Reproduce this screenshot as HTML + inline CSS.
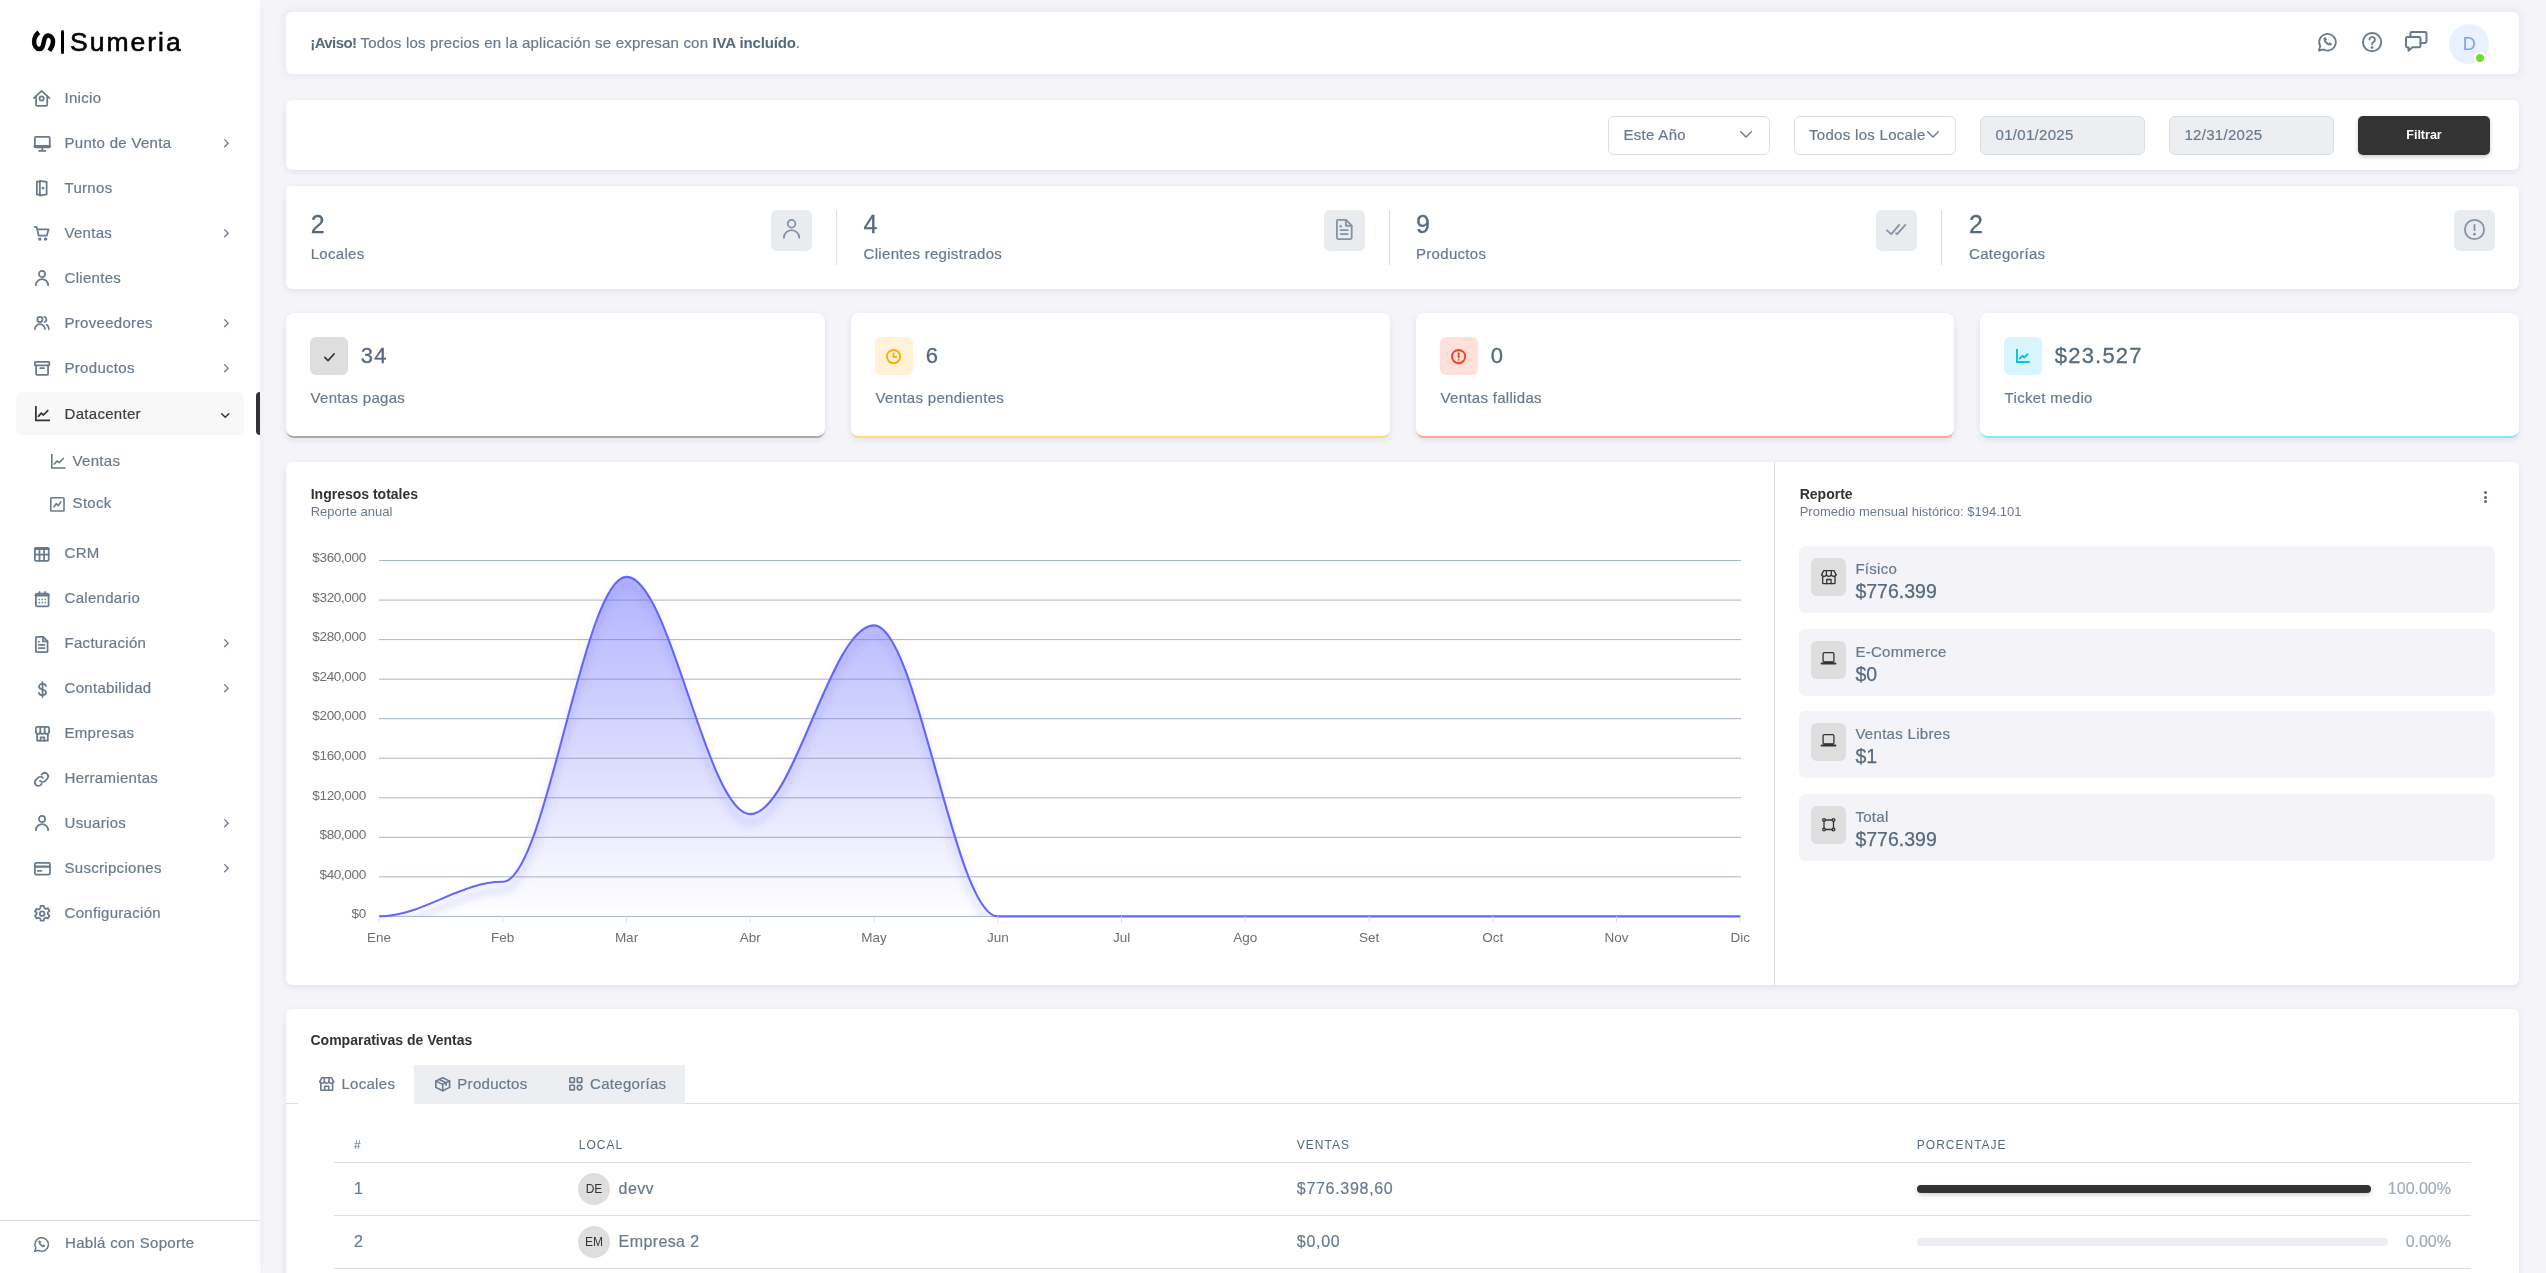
<!DOCTYPE html>
<html lang="es">
<head>
<meta charset="utf-8">
<title>Sumeria - Datacenter Ventas</title>
<style>
*{box-sizing:border-box;margin:0;padding:0}
html,body{width:2546px;height:1273px;overflow:hidden}
body{background:#f5f5f9;font-family:"Liberation Sans",sans-serif;color:#697a8d;position:relative}
.a{position:absolute}
.t{position:absolute;line-height:1;white-space:nowrap}
svg.i{position:absolute;fill:none;stroke:currentColor;stroke-width:2;stroke-linecap:round;stroke-linejoin:round;overflow:visible}
</style>
</head>
<body>

<div class="a" style="left:0;top:0;width:2546px;height:1273px;will-change:transform">
<div class="a" style="left:0;top:0;width:260px;height:1273px;background:#fff;box-shadow:0 0 6px rgba(161,172,184,.12)"></div>
<svg class="a" style="left:31px;top:30px;overflow:visible" width="25" height="24" viewBox="0 0 25 24"><path d="M7.9 2.4 C5 4.6 3.1 8 3.1 11.8 C3.1 16 5.3 19.1 8.4 19.1 C10.8 19.1 11.8 16.8 12.4 13.8 L13.5 9 C14.2 6.6 15.5 5.4 17.2 5.4 C20 5.4 22 8.2 22 11.8 C22 15 20.5 17.9 18.4 20.8" fill="none" stroke="#000" stroke-width="4.5" stroke-linecap="butt"/></svg>
<div class="a" style="left:61.2px;top:30px;width:3.3px;height:24px;background:#000;border-radius:1.7px;"></div>
<div class="t" style="left:70px;top:29.37px;font-size:26.5px;color:#000;letter-spacing:2px;-webkit-text-stroke:0.6px #000;">Sumeria</div>
<svg class="i" style="left:33.33px;top:89.65px;width:17.34px;height:16.70px;color:#697a8d;stroke-width:2.201" viewBox="1.100 1.500 21.801 21.001"><path d="M2.2 11.6 L12 2.6 L21.8 11.6"/><path d="M5 9.2 V20 q0 1.4 1.4 1.4 H17.6 q1.4 0 1.4-1.4 V9.2"/><circle cx="12" cy="12.3" r="2.7"/></svg>
<div class="t" style="left:64.5px;top:90.30px;font-size:15px;color:#697a8d;letter-spacing:0.3px;-webkit-text-stroke:0.2px #697a8d;">Inicio</div>
<svg class="i" style="left:33.70px;top:135.90px;width:16.61px;height:15.80px;color:#697a8d;stroke-width:2.167" viewBox="1.716 2.116 20.567 19.567"><rect x="2.8" y="3.2" width="18.4" height="13" rx="1"/><path d="M2.8 15 H21.2" stroke-width="3.2"/><path d="M12 17 V20.2 M8.2 20.6 H15.8"/></svg>
<div class="t" style="left:64.5px;top:135.30px;font-size:15px;color:#697a8d;letter-spacing:0.3px;-webkit-text-stroke:0.2px #697a8d;">Punto de Venta</div>
<svg class="i" style="left:224.19px;top:138.80px;width:4.83px;height:8.40px;color:#697a8d;stroke-width:2.098" viewBox="7.951 4.951 8.098 14.098"><path d="M9 6 L15 12 L9 18"/></svg>
<svg class="i" style="left:36.24px;top:180.00px;width:11.52px;height:16.40px;color:#697a8d;stroke-width:2.294" viewBox="3.453 1.253 15.094 21.494"><path d="M8.5 3.5 H4.6 V20.5 H8.5"/><path d="M8.5 2.4 L17.4 3.8 V20.2 L8.5 21.6 Z"/><circle cx="12.6" cy="12" r=".7" fill="currentColor"/></svg>
<div class="t" style="left:64.5px;top:180.30px;font-size:15px;color:#697a8d;letter-spacing:0.3px;-webkit-text-stroke:0.2px #697a8d;">Turnos</div>
<svg class="i" style="left:34.26px;top:226.00px;width:15.48px;height:14.80px;color:#697a8d;stroke-width:2.320" viewBox="1.240 2.240 20.520 19.620"><path d="M2.4 3.4 H4.6 L7.4 15 H18.2 L20.6 6.6 H5.8"/><circle cx="9" cy="19.6" r="1.1" fill="currentColor"/><circle cx="16.6" cy="19.6" r="1.1" fill="currentColor"/></svg>
<div class="t" style="left:64.5px;top:225.30px;font-size:15px;color:#697a8d;letter-spacing:0.3px;-webkit-text-stroke:0.2px #697a8d;">Ventas</div>
<svg class="i" style="left:224.19px;top:228.80px;width:4.83px;height:8.40px;color:#697a8d;stroke-width:2.098" viewBox="7.951 4.951 8.098 14.098"><path d="M9 6 L15 12 L9 18"/></svg>
<svg class="i" style="left:34.99px;top:270.15px;width:14.03px;height:16.10px;color:#697a8d;stroke-width:2.110" viewBox="3.545 2.645 16.910 19.410"><circle cx="12" cy="7.4" r="3.7"/><path d="M4.6 21 a7.4 7.4 0 0 1 14.8 0"/></svg>
<div class="t" style="left:64.5px;top:270.30px;font-size:15px;color:#697a8d;letter-spacing:0.3px;-webkit-text-stroke:0.2px #697a8d;">Clientes</div>
<svg class="i" style="left:34.14px;top:316.20px;width:15.72px;height:14.00px;color:#697a8d;stroke-width:2.357" viewBox="1.421 2.921 21.175 18.857"><circle cx="9.4" cy="7.6" r="3.5"/><path d="M2.6 20.6 a6.8 6.8 0 0 1 13.6 0"/><path d="M15.2 4.2 a3.5 3.5 0 0 1 .4 6.8 M18.6 14.6 a6.8 6.8 0 0 1 2.8 6"/></svg>
<div class="t" style="left:64.5px;top:315.30px;font-size:15px;color:#697a8d;letter-spacing:0.3px;-webkit-text-stroke:0.2px #697a8d;">Proveedores</div>
<svg class="i" style="left:224.19px;top:318.80px;width:4.83px;height:8.40px;color:#697a8d;stroke-width:2.098" viewBox="7.951 4.951 8.098 14.098"><path d="M9 6 L15 12 L9 18"/></svg>
<svg class="i" style="left:33.91px;top:360.90px;width:16.18px;height:14.80px;color:#697a8d;stroke-width:2.280" viewBox="1.460 2.460 21.080 19.280"><rect x="2.6" y="3.6" width="18.8" height="4.6" rx="1"/><path d="M4.2 8.2 V19.4 q0 1.2 1.2 1.2 H18.6 q1.2 0 1.2-1.2 V8.2"/><path d="M9.6 11.8 H14.4"/></svg>
<div class="t" style="left:64.5px;top:360.30px;font-size:15px;color:#697a8d;letter-spacing:0.3px;-webkit-text-stroke:0.2px #697a8d;">Productos</div>
<svg class="i" style="left:224.19px;top:363.80px;width:4.83px;height:8.40px;color:#697a8d;stroke-width:2.098" viewBox="7.951 4.951 8.098 14.098"><path d="M9 6 L15 12 L9 18"/></svg>
<div class="a" style="left:16px;top:392px;width:228px;height:43px;background:#f8f8f8;border-radius:6px;"></div>
<div class="a" style="left:256px;top:392px;width:4px;height:43px;background:#333;border-radius:0px;border-radius:4px 0 0 4px;"></div>
<svg class="i" style="left:34.50px;top:405.75px;width:15.00px;height:15.30px;color:#333;stroke-width:2.325" viewBox="2.238 1.438 19.925 20.325"><path d="M3.4 2.6 V20.6 H21" stroke-linecap="square" stroke-linejoin="miter"/><path d="M6.8 15.2 L10.6 11 L13.4 13.4 L19.2 7.6"/></svg>
<div class="t" style="left:64.5px;top:405.70px;font-size:15px;color:#3d3d3d;letter-spacing:0.3px;-webkit-text-stroke:0.2px #3d3d3d;">Datacenter</div>
<svg class="i" style="left:220.95px;top:412.50px;width:8.50px;height:5.00px;color:#333;stroke-width:2.571" viewBox="4.714 7.714 14.571 8.571"><path d="M6 9 L12 15 L18 9"/></svg>
<svg class="i" style="left:50.65px;top:454.00px;width:14.51px;height:14.80px;color:#697a8d;stroke-width:2.182" viewBox="2.309 1.509 19.782 20.182"><path d="M3.4 2.6 V20.6 H21" stroke-linecap="square" stroke-linejoin="miter"/><path d="M6.8 15.2 L10.6 11 L13.4 13.4 L19.2 7.6"/></svg>
<div class="t" style="left:72.6px;top:453.40px;font-size:15px;color:#697a8d;letter-spacing:0.3px;-webkit-text-stroke:0.2px #697a8d;">Ventas</div>
<svg class="i" style="left:50.40px;top:496.90px;width:14.80px;height:14.80px;color:#697a8d;stroke-width:2.133" viewBox="2.133 2.133 19.733 19.733"><rect x="3.2" y="3.2" width="17.6" height="17.6" rx="1"/><path d="M7.4 15.4 L10.4 11 L13.2 13.6 L16.6 8.6"/></svg>
<div class="t" style="left:72.6px;top:495.30px;font-size:15px;color:#697a8d;letter-spacing:0.3px;-webkit-text-stroke:0.2px #697a8d;">Stock</div>
<svg class="i" style="left:34.21px;top:546.95px;width:15.58px;height:14.70px;color:#697a8d;stroke-width:2.378" viewBox="1.411 2.011 21.178 19.978"><rect x="2.6" y="3.2" width="18.8" height="17.6" rx="1.6"/><path d="M2.6 4.6 H21.4" stroke-width="3"/><path d="M2.6 12.4 H21.4 M8.9 4 V20.6 M15.1 4 V20.6"/></svg>
<div class="t" style="left:64.5px;top:545.30px;font-size:15px;color:#697a8d;letter-spacing:0.3px;-webkit-text-stroke:0.2px #697a8d;">CRM</div>
<svg class="i" style="left:34.76px;top:591.05px;width:14.48px;height:16.30px;color:#697a8d;stroke-width:2.309" viewBox="2.445 1.245 19.109 21.509"><rect x="3.6" y="4.6" width="16.8" height="17" rx="1.6"/><path d="M3.6 7 H20.4" stroke-width="3.2"/><path d="M8.4 2.4 V5 M15.6 2.4 V5"/><path d="M8 12.6 h.01 M12 12.6 h.01 M16 12.6 h.01 M8 16.6 h.01 M12 16.6 h.01 M16 16.6 h.01" stroke-width="2.2"/></svg>
<div class="t" style="left:64.5px;top:590.30px;font-size:15px;color:#697a8d;letter-spacing:0.3px;-webkit-text-stroke:0.2px #697a8d;">Calendario</div>
<svg class="i" style="left:35.28px;top:636.05px;width:13.44px;height:16.90px;color:#697a8d;stroke-width:2.125" viewBox="3.937 1.737 16.325 20.525"><path d="M5 4 q0-1.2 1.2-1.2 H13.8 L19.2 8.2 V20 q0 1.2-1.2 1.2 H6.2 q-1.2 0-1.2-1.2 Z"/><path d="M13.6 3 V8.4 H19"/><path d="M8.6 8.8 h.01" stroke-width="2.4"/><path d="M8.6 12.6 H15.4 M8.6 16.4 H15.4"/></svg>
<div class="t" style="left:64.5px;top:635.30px;font-size:15px;color:#697a8d;letter-spacing:0.3px;-webkit-text-stroke:0.2px #697a8d;">Facturación</div>
<svg class="i" style="left:224.19px;top:638.80px;width:4.83px;height:8.40px;color:#697a8d;stroke-width:2.098" viewBox="7.951 4.951 8.098 14.098"><path d="M9 6 L15 12 L9 18"/></svg>
<svg class="i" style="left:37.55px;top:680.80px;width:8.90px;height:17.00px;color:#697a8d;stroke-width:2.203" viewBox="6.298 1.298 11.203 21.403"><path d="M16.4 7.6 C16 5.4 14 4.8 12 4.8 C9.4 4.8 7.6 6.2 7.6 8.4 C7.6 13 16.4 11 16.4 15.6 C16.4 17.8 14.4 19.2 12 19.2 C9.6 19.2 7.8 18.2 7.4 16.2"/><path d="M12 2.4 V21.6"/></svg>
<div class="t" style="left:64.5px;top:680.30px;font-size:15px;color:#697a8d;letter-spacing:0.3px;-webkit-text-stroke:0.2px #697a8d;">Contabilidad</div>
<svg class="i" style="left:224.19px;top:683.80px;width:4.83px;height:8.40px;color:#697a8d;stroke-width:2.098" viewBox="7.951 4.951 8.098 14.098"><path d="M9 6 L15 12 L9 18"/></svg>
<svg class="i" style="left:34.51px;top:726.10px;width:14.97px;height:15.60px;color:#697a8d;stroke-width:2.224" viewBox="2.488 2.088 19.024 19.824"><path d="M3.6 9.4 V5 q0-1.8 1.8-1.8 H18.6 q1.8 0 1.8 1.8 V9.4"/><path d="M3.6 9.4 a2.8 2.8 0 0 0 5.6 0 a2.8 2.8 0 0 0 5.6 0 a2.8 2.8 0 0 0 5.6 0"/><path d="M9.2 9.4 V3.4 M14.8 9.4 V3.4"/><path d="M5.2 12.4 V20.8 H18.8 V12.4"/><path d="M9.6 20.8 V16.4 H14.4 V20.8"/></svg>
<div class="t" style="left:64.5px;top:725.30px;font-size:15px;color:#697a8d;letter-spacing:0.3px;-webkit-text-stroke:0.2px #697a8d;">Empresas</div>
<svg class="i" style="left:34.48px;top:772.05px;width:15.03px;height:14.70px;color:#697a8d;stroke-width:2.110" viewBox="2.938 3.138 18.124 17.724"><path d="M10.2 13.8 a4.2 4.2 0 0 0 5.9 .2 l3-3 a4.2 4.2 0 0 0-5.9-5.9 l-1.3 1.3"/><path d="M13.8 10.2 a4.2 4.2 0 0 0-5.9-.2 l-3 3 a4.2 4.2 0 0 0 5.9 5.9 l1.3-1.3"/></svg>
<div class="t" style="left:64.5px;top:770.30px;font-size:15px;color:#697a8d;letter-spacing:0.3px;-webkit-text-stroke:0.2px #697a8d;">Herramientas</div>
<svg class="i" style="left:34.99px;top:815.15px;width:14.03px;height:16.10px;color:#697a8d;stroke-width:2.110" viewBox="3.545 2.645 16.910 19.410"><circle cx="12" cy="7.4" r="3.7"/><path d="M4.6 21 a7.4 7.4 0 0 1 14.8 0"/></svg>
<div class="t" style="left:64.5px;top:815.30px;font-size:15px;color:#697a8d;letter-spacing:0.3px;-webkit-text-stroke:0.2px #697a8d;">Usuarios</div>
<svg class="i" style="left:224.19px;top:818.80px;width:4.83px;height:8.40px;color:#697a8d;stroke-width:2.098" viewBox="7.951 4.951 8.098 14.098"><path d="M9 6 L15 12 L9 18"/></svg>
<svg class="i" style="left:33.57px;top:861.50px;width:16.86px;height:13.40px;color:#697a8d;stroke-width:2.223" viewBox="1.288 3.488 21.423 17.023"><rect x="2.4" y="4.6" width="19.2" height="14.8" rx="1.6"/><path d="M2.4 9.4 H21.6" stroke-width="3"/><path d="M6.2 14.8 H10.4"/></svg>
<div class="t" style="left:64.5px;top:860.30px;font-size:15px;color:#697a8d;letter-spacing:0.3px;-webkit-text-stroke:0.2px #697a8d;">Suscripciones</div>
<svg class="i" style="left:224.19px;top:863.80px;width:4.83px;height:8.40px;color:#697a8d;stroke-width:2.098" viewBox="7.951 4.951 8.098 14.098"><path d="M9 6 L15 12 L9 18"/></svg>
<svg class="i" style="left:33.83px;top:905.00px;width:16.35px;height:16.60px;color:#697a8d;stroke-width:2.074" viewBox="2.263 1.763 19.374 19.674"><circle cx="12" cy="12" r="2.8"/><path d="M10.2 2.8 h3.6 l.6 2.5 1.9 1.1 2.5-.8 1.8 3.1-1.9 1.8 v2.2 l1.9 1.8-1.8 3.1-2.5-.8-1.9 1.1-.6 2.5 h-3.6 l-.6-2.5-1.9-1.1-2.5.8-1.8-3.1 1.9-1.8 v-2.2 L3.3 9.5 l1.8-3.1 2.5.8 1.9-1.1 Z"/></svg>
<div class="t" style="left:64.5px;top:905.30px;font-size:15px;color:#697a8d;letter-spacing:0.3px;-webkit-text-stroke:0.2px #697a8d;">Configuración</div>
<div class="a" style="left:0px;top:1220px;width:260px;height:1px;background:#d9dee3;border-radius:0px;"></div>
<svg class="i" style="left:34.32px;top:1236.70px;width:15.16px;height:15.00px;color:#697a8d;stroke-width:1.919" viewBox="2.241 2.574 19.385 19.185"><path d="M3.2 20.8 L4.6 16.4 A8.6 8.6 0 1 1 7.8 19.6 Z"/><path d="M8.6 8.4 q.3-1 1.2-1.1 l1.2 2.2 -.9 1 q.9 2 3 3 l1-.9 2.2 1.2 q-.1 .9-1.1 1.2 C11.6 15.4 8 11.8 8.6 8.4 Z" fill="currentColor" stroke-width="1"/></svg>
<div class="t" style="left:65px;top:1235.30px;font-size:15px;color:#697a8d;letter-spacing:0.3px;-webkit-text-stroke:0.2px #697a8d;">Hablá con Soporte</div>
<div class="a" style="left:286px;top:12px;width:2233px;height:62px;background:#fff;border-radius:6px;box-shadow:0 0 6px 3px rgba(161,172,184,.15)"></div>
<div class="t" style="left:310.3px;top:35.10px;font-size:15px;color:#697a8d;letter-spacing:0.0001px;-webkit-text-stroke:0.2px #697a8d;"><b style="color:#566a7f;letter-spacing:-0.6px;-webkit-text-stroke:0">¡Aviso!</b><span style="letter-spacing:0.2px"> Todos los precios en la aplicación se expresan con </span><b style="color:#566a7f;letter-spacing:-0.15px;-webkit-text-stroke:0">IVA incluído</b>.</div>
<svg class="i" style="left:2317.85px;top:32.65px;width:18.69px;height:18.50px;color:#697a8d;stroke-width:1.861" viewBox="2.269 2.603 19.328 19.128"><path d="M3.2 20.8 L4.6 16.4 A8.6 8.6 0 1 1 7.8 19.6 Z"/><path d="M8.6 8.4 q.3-1 1.2-1.1 l1.2 2.2 -.9 1 q.9 2 3 3 l1-.9 2.2 1.2 q-.1 .9-1.1 1.2 C11.6 15.4 8 11.8 8.6 8.4 Z" fill="currentColor" stroke-width="1"/></svg>
<svg class="i" style="left:2361.90px;top:32.00px;width:20.20px;height:20.20px;color:#697a8d;stroke-width:1.952" viewBox="1.624 1.624 20.752 20.752"><circle cx="12" cy="12" r="9.4"/><path d="M9.3 9.4 a2.8 2.8 0 1 1 4.2 2.5 c-.9.5-1.5 1.1-1.5 2.3"/><path d="M12 17.6 h.01" stroke-width="2.8"/></svg>
<svg class="i" style="left:2405.46px;top:31.25px;width:22.48px;height:20.70px;color:#697a8d;stroke-width:1.797" viewBox="1.902 2.902 20.197 18.597"><path d="M2.8 9.6 q0-1.2 1.2-1.2 H14.6 q1.2 0 1.2 1.2 V16.4 q0 1.2-1.2 1.2 H8.6 L5 20.6 V17.6 H4 q-1.2 0-1.2-1.2 Z"/><path d="M6.8 8.4 V5 q0-1.2 1.2-1.2 H20 q1.2 0 1.2 1.2 V12.4 q0 1.2-1.2 1.2 H15.8"/></svg>
<div class="a" style="left:2449px;top:24px;width:40px;height:40px;border-radius:50%;background:#eaf1fe"></div>
<div class="t" style="left:2269.3px;width:400px;text-align:center;top:34.96px;font-size:18px;color:#7f9ef7;-webkit-text-stroke:0;">D</div>
<div class="a" style="left:2474px;top:52px;width:12px;height:12px;border-radius:50%;background:#71dd37;border:2px solid #fff"></div>
<div class="a" style="left:286px;top:100px;width:2233px;height:70px;background:#fff;border-radius:6px;box-shadow:0 2px 6px 0 rgba(67,89,113,.12);"></div>
<div class="a" style="left:1608px;top:116px;width:162px;height:39px;background:#fff;border:1px solid #d9dee3;border-radius:6px"></div>
<div class="t" style="left:1623.5px;top:127.30px;font-size:15px;color:#697a8d;letter-spacing:0.3px;-webkit-text-stroke:0.2px #697a8d;">Este Año</div>
<svg class="i" style="left:1740.00px;top:131.25px;width:12.00px;height:6.70px;color:#697a8d;stroke-width:1.585" viewBox="5.208 8.208 13.585 7.585"><path d="M6 9 L12 15 L18 9"/></svg>
<div class="a" style="left:1794px;top:116px;width:162px;height:39px;background:#fff;border:1px solid #d9dee3;border-radius:6px"></div>
<div class="a" style="left:1809px;top:120px;width:116px;height:30px;overflow:hidden">
<div class="t" style="left:0px;top:7.30px;font-size:15px;color:#697a8d;letter-spacing:0.3px;-webkit-text-stroke:0.2px #697a8d;">Todos los Locales</div>
</div>
<svg class="i" style="left:1926.60px;top:131.25px;width:12.00px;height:6.70px;color:#697a8d;stroke-width:1.585" viewBox="5.208 8.208 13.585 7.585"><path d="M6 9 L12 15 L18 9"/></svg>
<div class="a" style="left:1980px;top:116px;width:165px;height:39px;background:#eceef1;border:1px solid #d9dee3;border-radius:6px"></div>
<div class="t" style="left:1995.5px;top:127.30px;font-size:15px;color:#697a8d;letter-spacing:0.3px;-webkit-text-stroke:0.2px #697a8d;">01/01/2025</div>
<div class="a" style="left:2169px;top:116px;width:165px;height:39px;background:#eceef1;border:1px solid #d9dee3;border-radius:6px"></div>
<div class="t" style="left:2184.4px;top:127.30px;font-size:15px;color:#697a8d;letter-spacing:0.3px;-webkit-text-stroke:0.2px #697a8d;">12/31/2025</div>
<div class="a" style="left:2358px;top:116px;width:132px;height:39px;background:#333;border-radius:5px;box-shadow:0 2px 4px rgba(0,0,0,.2);"></div>
<div class="t" style="left:2224px;width:400px;text-align:center;top:128.72px;font-size:12.5px;color:#fff;font-weight:700;">Filtrar</div>
<div class="a" style="left:286px;top:186px;width:2233px;height:103px;background:#fff;border-radius:6px;box-shadow:0 2px 6px 0 rgba(67,89,113,.12);"></div>
<div class="t" style="left:310.7px;top:211.54px;font-size:25px;color:#566a7f;-webkit-text-stroke:0.3px #566a7f;">2</div>
<div class="t" style="left:310.7px;top:246.30px;font-size:15px;color:#697a8d;letter-spacing:0.3px;-webkit-text-stroke:0.2px #697a8d;">Locales</div>
<div class="a" style="left:771px;top:210px;width:41px;height:40.5px;background:#e9ecef;border-radius:6px;"></div>
<svg class="i" style="left:782.94px;top:219.35px;width:17.11px;height:19.70px;color:#8592a3;stroke-width:1.740" viewBox="3.730 2.830 16.540 19.040"><circle cx="12" cy="7.4" r="3.7"/><path d="M4.6 21 a7.4 7.4 0 0 1 14.8 0"/></svg>
<div class="a" style="left:836px;top:210px;width:1px;height:55px;background:#d9dee3;border-radius:0px;"></div>
<div class="t" style="left:863.6px;top:211.54px;font-size:25px;color:#566a7f;-webkit-text-stroke:0.3px #566a7f;">4</div>
<div class="t" style="left:863.6px;top:246.30px;font-size:15px;color:#697a8d;letter-spacing:0.3px;-webkit-text-stroke:0.2px #697a8d;">Clientes registrados</div>
<div class="a" style="left:1324px;top:210px;width:41px;height:40.5px;background:#e9ecef;border-radius:6px;"></div>
<svg class="i" style="left:1336.19px;top:218.70px;width:16.62px;height:21.00px;color:#8592a3;stroke-width:1.725" viewBox="4.137 1.937 15.925 20.125"><path d="M5 4 q0-1.2 1.2-1.2 H13.8 L19.2 8.2 V20 q0 1.2-1.2 1.2 H6.2 q-1.2 0-1.2-1.2 Z"/><path d="M13.6 3 V8.4 H19"/><path d="M8.6 8.8 h.01" stroke-width="2.4"/><path d="M8.6 12.6 H15.4 M8.6 16.4 H15.4"/></svg>
<div class="a" style="left:1389px;top:210px;width:1px;height:55px;background:#d9dee3;border-radius:0px;"></div>
<div class="t" style="left:1416px;top:211.54px;font-size:25px;color:#566a7f;-webkit-text-stroke:0.3px #566a7f;">9</div>
<div class="t" style="left:1416px;top:246.30px;font-size:15px;color:#697a8d;letter-spacing:0.3px;-webkit-text-stroke:0.2px #697a8d;">Productos</div>
<div class="a" style="left:1876px;top:210px;width:41px;height:40.5px;background:#e9ecef;border-radius:6px;"></div>
<svg class="i" style="left:1886.40px;top:223.70px;width:20.20px;height:11.00px;color:#8592a3;stroke-width:1.722" viewBox="2.339 6.539 19.322 10.522"><path d="M3.2 12.6 L7.4 16.2 L15 7.4"/><path d="M12 15.4 L13 16.2 L20.8 7.4"/></svg>
<div class="a" style="left:1941px;top:210px;width:1px;height:55px;background:#d9dee3;border-radius:0px;"></div>
<div class="t" style="left:1969px;top:211.54px;font-size:25px;color:#566a7f;-webkit-text-stroke:0.3px #566a7f;">2</div>
<div class="t" style="left:1969px;top:246.30px;font-size:15px;color:#697a8d;letter-spacing:0.3px;-webkit-text-stroke:0.2px #697a8d;">Categorías</div>
<div class="a" style="left:2454px;top:210px;width:41px;height:40.5px;background:#e9ecef;border-radius:6px;"></div>
<svg class="i" style="left:2464.00px;top:218.70px;width:21.00px;height:21.00px;color:#8592a3;stroke-width:1.613" viewBox="2.594 2.594 18.813 18.813"><circle cx="12" cy="12" r="8.6"/><path d="M12 7.8 V12.6"/><path d="M12 16.2 h.01" stroke-width="2.4"/></svg>
<div class="a" style="left:286px;top:313px;width:539px;height:125px;background:#fff;border-radius:8px;border-bottom:2px solid #a9a9a9;box-shadow:0 2px 6px 0 rgba(67,89,113,.12);"></div>
<div class="a" style="left:310px;top:337px;width:38px;height:38px;background:#dedede;border-radius:6px;"></div>
<svg class="i" style="left:323.70px;top:352.60px;width:11.00px;height:8.41px;color:#333;stroke-width:2.468" viewBox="3.766 5.766 16.968 12.968"><path d="M5 12.5 L10 17.5 L19.5 7"/></svg>
<div class="t" style="left:360.8px;top:345.28px;font-size:22px;color:#566a7f;letter-spacing:1.2px;-webkit-text-stroke:0.3px #566a7f;">34</div>
<div class="t" style="left:310.6px;top:390.10px;font-size:15px;color:#697a8d;letter-spacing:0.3px;-webkit-text-stroke:0.2px #697a8d;">Ventas pagas</div>
<div class="a" style="left:851px;top:313px;width:539px;height:125px;background:#fff;border-radius:8px;border-bottom:2px solid #ffd980;box-shadow:0 2px 6px 0 rgba(67,89,113,.12);"></div>
<div class="a" style="left:875px;top:337px;width:38px;height:38px;background:#fff2d6;border-radius:6px;"></div>
<svg class="i" style="left:885.90px;top:348.60px;width:15.20px;height:15.20px;color:#ffab00;stroke-width:2.457" viewBox="2.171 2.171 19.657 19.657"><circle cx="12" cy="12" r="8.6"/><path d="M12 7.6 V12.4 H15.4"/></svg>
<div class="t" style="left:925.8px;top:345.28px;font-size:22px;color:#566a7f;letter-spacing:1.2px;-webkit-text-stroke:0.3px #566a7f;">6</div>
<div class="t" style="left:875.6px;top:390.10px;font-size:15px;color:#697a8d;letter-spacing:0.3px;-webkit-text-stroke:0.2px #697a8d;">Ventas pendientes</div>
<div class="a" style="left:1416px;top:313px;width:538px;height:125px;background:#fff;border-radius:8px;border-bottom:2px solid #ffa896;box-shadow:0 2px 6px 0 rgba(67,89,113,.12);"></div>
<div class="a" style="left:1440px;top:337px;width:38px;height:38px;background:#ffe0db;border-radius:6px;"></div>
<svg class="i" style="left:1450.90px;top:348.60px;width:15.20px;height:15.20px;color:#ff3e1d;stroke-width:2.457" viewBox="2.171 2.171 19.657 19.657"><circle cx="12" cy="12" r="8.6"/><path d="M12 7.8 V12.6"/><path d="M12 16.2 h.01" stroke-width="2.4"/></svg>
<div class="t" style="left:1490.8px;top:345.28px;font-size:22px;color:#566a7f;letter-spacing:1.2px;-webkit-text-stroke:0.3px #566a7f;">0</div>
<div class="t" style="left:1440.6px;top:390.10px;font-size:15px;color:#697a8d;letter-spacing:0.3px;-webkit-text-stroke:0.2px #697a8d;">Ventas fallidas</div>
<div class="a" style="left:1980px;top:313px;width:539px;height:125px;background:#fff;border-radius:8px;border-bottom:2px solid #90e3f5;box-shadow:0 2px 6px 0 rgba(67,89,113,.12);"></div>
<div class="a" style="left:2004px;top:337px;width:38px;height:38px;background:#d7f5fc;border-radius:6px;"></div>
<svg class="i" style="left:2016.14px;top:349.00px;width:13.71px;height:14.00px;color:#03c3ec;stroke-width:2.638" viewBox="2.681 2.281 19.038 19.438"><path d="M4 3.6 V20.4 H20.4" stroke-linecap="square" stroke-linejoin="miter"/><path d="M8 15.6 L11.6 11.6 L14.2 14 L18.8 9.6"/></svg>
<div class="t" style="left:2054.8px;top:345.28px;font-size:22px;color:#566a7f;letter-spacing:1.2px;-webkit-text-stroke:0.3px #566a7f;">$23.527</div>
<div class="t" style="left:2004.6px;top:390.10px;font-size:15px;color:#697a8d;letter-spacing:0.3px;-webkit-text-stroke:0.2px #697a8d;">Ticket medio</div>
<div class="a" style="left:286px;top:462px;width:2233px;height:523px;background:#fff;border-radius:6px;box-shadow:0 2px 6px 0 rgba(67,89,113,.12);"></div>
<div class="a" style="left:1774px;top:462px;width:1px;height:523px;background:#d9dee3;border-radius:0px;"></div>
<div class="t" style="left:310.7px;top:487.15px;font-size:14px;color:#333333;font-weight:700;">Ingresos totales</div>
<div class="t" style="left:310.7px;top:504.80px;font-size:13px;color:#697a8d;">Reporte anual</div>
<svg class="a" style="left:0;top:0" width="2546" height="1273" viewBox="0 0 2546 1273"><defs><linearGradient id="gf" x1="0" y1="0" x2="0" y2="1" gradientUnits="objectBoundingBox"><stop offset="0" stop-color="#696cff" stop-opacity="0.52"/><stop offset="1" stop-color="#696cff" stop-opacity="0.0"/></linearGradient><filter id="blur" x="-10%" y="-10%" width="120%" height="130%"><feGaussianBlur stdDeviation="3.5"/></filter><clipPath id="plot"><rect x="370" y="540" width="1380" height="376.4"/></clipPath></defs><line x1="379.0" x2="1741" y1="916.40" y2="916.40" stroke="#a7b6c0" stroke-width="1"/><line x1="379.0" x2="1741" y1="876.86" y2="876.86" stroke="#a7b6c0" stroke-width="1"/><line x1="379.0" x2="1741" y1="837.32" y2="837.32" stroke="#a7b6c0" stroke-width="1"/><line x1="379.0" x2="1741" y1="797.78" y2="797.78" stroke="#a7b6c0" stroke-width="1"/><line x1="379.0" x2="1741" y1="758.24" y2="758.24" stroke="#a7b6c0" stroke-width="1"/><line x1="379.0" x2="1741" y1="718.70" y2="718.70" stroke="#a7b6c0" stroke-width="1"/><line x1="379.0" x2="1741" y1="679.16" y2="679.16" stroke="#a7b6c0" stroke-width="1"/><line x1="379.0" x2="1741" y1="639.62" y2="639.62" stroke="#a7b6c0" stroke-width="1"/><line x1="379.0" x2="1741" y1="600.08" y2="600.08" stroke="#a7b6c0" stroke-width="1"/><line x1="379.0" x2="1741" y1="560.54" y2="560.54" stroke="#a7b6c0" stroke-width="1"/><path d="M379.00,916.40 C422.31,916.40 459.44,881.80 502.75,881.80 C546.07,881.80 583.19,576.85 626.51,576.85 C669.82,576.85 706.95,814.09 750.26,814.09 C793.58,814.09 830.70,625.39 874.02,625.39 C917.33,625.39 954.46,916.40 997.77,916.40 C1041.09,916.40 1078.21,916.40 1121.53,916.40 C1164.84,916.40 1201.97,916.40 1245.28,916.40 C1288.60,916.40 1325.72,916.40 1369.04,916.40 C1412.35,916.40 1449.48,916.40 1492.79,916.40 C1536.11,916.40 1573.23,916.40 1616.55,916.40 C1659.86,916.40 1696.99,916.40 1740.30,916.40 L1740.30,916.40 L379.00,916.40 Z" fill="url(#gf)"/><g clip-path="url(#plot)"><path d="M379.00,916.40 C422.31,916.40 459.44,881.80 502.75,881.80 C546.07,881.80 583.19,576.85 626.51,576.85 C669.82,576.85 706.95,814.09 750.26,814.09 C793.58,814.09 830.70,625.39 874.02,625.39 C917.33,625.39 954.46,916.40 997.77,916.40 C1041.09,916.40 1078.21,916.40 1121.53,916.40 C1164.84,916.40 1201.97,916.40 1245.28,916.40 C1288.60,916.40 1325.72,916.40 1369.04,916.40 C1412.35,916.40 1449.48,916.40 1492.79,916.40 C1536.11,916.40 1573.23,916.40 1616.55,916.40 C1659.86,916.40 1696.99,916.40 1740.30,916.40" fill="none" stroke="#696cff" stroke-opacity=".18" stroke-width="6" transform="translate(0,9)" filter="url(#blur)"/></g><path d="M379.00,916.40 C422.31,916.40 459.44,881.80 502.75,881.80 C546.07,881.80 583.19,576.85 626.51,576.85 C669.82,576.85 706.95,814.09 750.26,814.09 C793.58,814.09 830.70,625.39 874.02,625.39 C917.33,625.39 954.46,916.40 997.77,916.40 C1041.09,916.40 1078.21,916.40 1121.53,916.40 C1164.84,916.40 1201.97,916.40 1245.28,916.40 C1288.60,916.40 1325.72,916.40 1369.04,916.40 C1412.35,916.40 1449.48,916.40 1492.79,916.40 C1536.11,916.40 1573.23,916.40 1616.55,916.40 C1659.86,916.40 1696.99,916.40 1740.30,916.40" fill="none" stroke="#6366ff" stroke-width="2.1"/><line x1="379.00" x2="379.00" y1="916.4" y2="922.9" stroke="#dde1e5" stroke-width="1"/><line x1="502.75" x2="502.75" y1="916.4" y2="922.9" stroke="#dde1e5" stroke-width="1"/><line x1="626.51" x2="626.51" y1="916.4" y2="922.9" stroke="#dde1e5" stroke-width="1"/><line x1="750.26" x2="750.26" y1="916.4" y2="922.9" stroke="#dde1e5" stroke-width="1"/><line x1="874.02" x2="874.02" y1="916.4" y2="922.9" stroke="#dde1e5" stroke-width="1"/><line x1="997.77" x2="997.77" y1="916.4" y2="922.9" stroke="#dde1e5" stroke-width="1"/><line x1="1121.53" x2="1121.53" y1="916.4" y2="922.9" stroke="#dde1e5" stroke-width="1"/><line x1="1245.28" x2="1245.28" y1="916.4" y2="922.9" stroke="#dde1e5" stroke-width="1"/><line x1="1369.04" x2="1369.04" y1="916.4" y2="922.9" stroke="#dde1e5" stroke-width="1"/><line x1="1492.79" x2="1492.79" y1="916.4" y2="922.9" stroke="#dde1e5" stroke-width="1"/><line x1="1616.55" x2="1616.55" y1="916.4" y2="922.9" stroke="#dde1e5" stroke-width="1"/><line x1="1740.30" x2="1740.30" y1="916.4" y2="922.9" stroke="#dde1e5" stroke-width="1"/></svg>
<div class="t" style="right:2180.5px;top:907.17px;font-size:13.5px;color:#6e6e6e;letter-spacing:-0.35px;margin-right:-0.35px;">$0</div>
<div class="t" style="right:2180.5px;top:867.63px;font-size:13.5px;color:#6e6e6e;letter-spacing:-0.35px;margin-right:-0.35px;">$40,000</div>
<div class="t" style="right:2180.5px;top:828.09px;font-size:13.5px;color:#6e6e6e;letter-spacing:-0.35px;margin-right:-0.35px;">$80,000</div>
<div class="t" style="right:2180.5px;top:788.55px;font-size:13.5px;color:#6e6e6e;letter-spacing:-0.35px;margin-right:-0.35px;">$120,000</div>
<div class="t" style="right:2180.5px;top:749.01px;font-size:13.5px;color:#6e6e6e;letter-spacing:-0.35px;margin-right:-0.35px;">$160,000</div>
<div class="t" style="right:2180.5px;top:709.47px;font-size:13.5px;color:#6e6e6e;letter-spacing:-0.35px;margin-right:-0.35px;">$200,000</div>
<div class="t" style="right:2180.5px;top:669.93px;font-size:13.5px;color:#6e6e6e;letter-spacing:-0.35px;margin-right:-0.35px;">$240,000</div>
<div class="t" style="right:2180.5px;top:630.39px;font-size:13.5px;color:#6e6e6e;letter-spacing:-0.35px;margin-right:-0.35px;">$280,000</div>
<div class="t" style="right:2180.5px;top:590.85px;font-size:13.5px;color:#6e6e6e;letter-spacing:-0.35px;margin-right:-0.35px;">$320,000</div>
<div class="t" style="right:2180.5px;top:551.31px;font-size:13.5px;color:#6e6e6e;letter-spacing:-0.35px;margin-right:-0.35px;">$360,000</div>
<div class="t" style="left:179.0px;width:400px;text-align:center;top:930.87px;font-size:13.5px;color:#6e6e6e;">Ene</div>
<div class="t" style="left:302.75454545454545px;width:400px;text-align:center;top:930.87px;font-size:13.5px;color:#6e6e6e;">Feb</div>
<div class="t" style="left:426.5090909090909px;width:400px;text-align:center;top:930.87px;font-size:13.5px;color:#6e6e6e;">Mar</div>
<div class="t" style="left:550.2636363636364px;width:400px;text-align:center;top:930.87px;font-size:13.5px;color:#6e6e6e;">Abr</div>
<div class="t" style="left:674.0181818181818px;width:400px;text-align:center;top:930.87px;font-size:13.5px;color:#6e6e6e;">May</div>
<div class="t" style="left:797.7727272727273px;width:400px;text-align:center;top:930.87px;font-size:13.5px;color:#6e6e6e;">Jun</div>
<div class="t" style="left:921.5272727272727px;width:400px;text-align:center;top:930.87px;font-size:13.5px;color:#6e6e6e;">Jul</div>
<div class="t" style="left:1045.2818181818182px;width:400px;text-align:center;top:930.87px;font-size:13.5px;color:#6e6e6e;">Ago</div>
<div class="t" style="left:1169.0363636363636px;width:400px;text-align:center;top:930.87px;font-size:13.5px;color:#6e6e6e;">Set</div>
<div class="t" style="left:1292.790909090909px;width:400px;text-align:center;top:930.87px;font-size:13.5px;color:#6e6e6e;">Oct</div>
<div class="t" style="left:1416.5454545454545px;width:400px;text-align:center;top:930.87px;font-size:13.5px;color:#6e6e6e;">Nov</div>
<div class="t" style="left:1540.3px;width:400px;text-align:center;top:930.87px;font-size:13.5px;color:#6e6e6e;">Dic</div>
<div class="t" style="left:1799.7px;top:487.15px;font-size:14px;color:#333333;font-weight:700;">Reporte</div>
<div class="t" style="left:1799.7px;top:504.70px;font-size:13px;color:#697a8d;">Promedio mensual histórico: $194.101</div>
<div class="a" style="left:2483.8px;top:490.9px;width:3.2px;height:3.2px;border-radius:50%;background:#566a7f"></div>
<div class="a" style="left:2483.8px;top:495.5px;width:3.2px;height:3.2px;border-radius:50%;background:#566a7f"></div>
<div class="a" style="left:2483.8px;top:500.09999999999997px;width:3.2px;height:3.2px;border-radius:50%;background:#566a7f"></div>
<div class="a" style="left:1799px;top:546px;width:696px;height:66.5px;background:#f4f4f8;border-radius:6px;"></div>
<div class="a" style="left:1811px;top:558px;width:35px;height:38px;background:#dedede;border-radius:6px;"></div>
<svg class="i" style="left:1820.63px;top:569.95px;width:15.74px;height:14.30px;color:#333;stroke-width:2.120" viewBox="-0.760 -0.260 25.670 23.320"><path d="M3.7 0.8 H20.4 L23.8 7.2 M3.7 0.8 L0.3 7.2"/><path d="M0.3 7.2 a3.93 3 0 0 0 7.85 0 a3.93 3 0 0 0 7.85 0 a3.93 3 0 0 0 7.85 0"/><path d="M7.9 0.8 L8.15 7.2 M16.2 0.8 L15.95 7.2"/><path d="M2 10 V21 q0 1 1 1 H21.1 q1 0 1-1 V10"/><path d="M8.6 22 V15.2 H15.6 V22"/></svg>
<div class="t" style="left:1855.4px;top:561.30px;font-size:15px;color:#697a8d;letter-spacing:0.3px;-webkit-text-stroke:0.2px #697a8d;">Físico</div>
<div class="t" style="left:1855.4px;top:582.49px;font-size:19.5px;color:#566a7f;-webkit-text-stroke:0.25px #566a7f;">$776.399</div>
<div class="a" style="left:1799px;top:629px;width:696px;height:66.5px;background:#f4f4f8;border-radius:6px;"></div>
<div class="a" style="left:1811px;top:641px;width:35px;height:38px;background:#dedede;border-radius:6px;"></div>
<svg class="i" style="left:1821.00px;top:652.29px;width:15.00px;height:12.22px;color:#333;stroke-width:1.822" viewBox="1.489 1.489 21.022 17.122"><rect x="4.4" y="2.4" width="15.2" height="13" rx="1.8"/><path d="M2.4 17.7 H21.6" stroke-width="2.8"/><path d="M6 16 H18" stroke-width="2"/></svg>
<div class="t" style="left:1855.4px;top:644.30px;font-size:15px;color:#697a8d;letter-spacing:0.3px;-webkit-text-stroke:0.2px #697a8d;">E-Commerce</div>
<div class="t" style="left:1855.4px;top:665.49px;font-size:19.5px;color:#566a7f;-webkit-text-stroke:0.25px #566a7f;">$0</div>
<div class="a" style="left:1799px;top:711px;width:696px;height:66.5px;background:#f4f4f8;border-radius:6px;"></div>
<div class="a" style="left:1811px;top:723px;width:35px;height:38px;background:#dedede;border-radius:6px;"></div>
<svg class="i" style="left:1821.00px;top:734.29px;width:15.00px;height:12.22px;color:#333;stroke-width:1.822" viewBox="1.489 1.489 21.022 17.122"><rect x="4.4" y="2.4" width="15.2" height="13" rx="1.8"/><path d="M2.4 17.7 H21.6" stroke-width="2.8"/><path d="M6 16 H18" stroke-width="2"/></svg>
<div class="t" style="left:1855.4px;top:726.30px;font-size:15px;color:#697a8d;letter-spacing:0.3px;-webkit-text-stroke:0.2px #697a8d;">Ventas Libres</div>
<div class="t" style="left:1855.4px;top:747.49px;font-size:19.5px;color:#566a7f;-webkit-text-stroke:0.25px #566a7f;">$1</div>
<div class="a" style="left:1799px;top:794px;width:696px;height:66.5px;background:#f4f4f8;border-radius:6px;"></div>
<div class="a" style="left:1811px;top:806px;width:35px;height:38px;background:#dedede;border-radius:6px;"></div>
<svg class="i" style="left:1821.75px;top:817.75px;width:13.50px;height:13.50px;color:#333;stroke-width:1.918" viewBox="2.041 2.041 19.918 19.918"><circle cx="5" cy="5" r="2"/><circle cx="19" cy="5" r="2"/><circle cx="5" cy="19" r="2"/><circle cx="19" cy="19" r="2"/><path d="M7 5 H17 M7 19 H17 M5 7 V17 M19 7 V17"/></svg>
<div class="t" style="left:1855.4px;top:809.30px;font-size:15px;color:#697a8d;letter-spacing:0.3px;-webkit-text-stroke:0.2px #697a8d;">Total</div>
<div class="t" style="left:1855.4px;top:830.49px;font-size:19.5px;color:#566a7f;-webkit-text-stroke:0.25px #566a7f;">$776.399</div>
<div class="a" style="left:286px;top:1009px;width:2233px;height:400px;background:#fff;border-radius:6px;box-shadow:0 2px 6px 0 rgba(67,89,113,.12);"></div>
<div class="t" style="left:310.5px;top:1033.15px;font-size:14px;color:#333333;font-weight:700;">Comparativas de Ventas</div>
<div class="a" style="left:286px;top:1103px;width:2233px;height:1px;background:#d9dee3;border-radius:0px;"></div>
<div class="a" style="left:298px;top:1065px;width:116px;height:39px;background:#fff;border-radius:0px;"></div>
<div class="a" style="left:414px;top:1065px;width:271px;height:39px;background:#eceef1;border-radius:0px;"></div>
<svg class="i" style="left:319.30px;top:1076.69px;width:15.40px;height:14.02px;color:#697a8d;stroke-width:2.730" viewBox="-1.065 -0.565 26.280 23.930"><path d="M3.7 0.8 H20.4 L23.8 7.2 M3.7 0.8 L0.3 7.2"/><path d="M0.3 7.2 a3.93 3 0 0 0 7.85 0 a3.93 3 0 0 0 7.85 0 a3.93 3 0 0 0 7.85 0"/><path d="M7.9 0.8 L8.15 7.2 M16.2 0.8 L15.95 7.2"/><path d="M2 10 V21 q0 1 1 1 H21.1 q1 0 1-1 V10"/><path d="M8.6 22 V15.2 H15.6 V22"/></svg>
<div class="t" style="left:341.4px;top:1076.30px;font-size:15px;color:#697a8d;letter-spacing:0.3px;-webkit-text-stroke:0.2px #697a8d;">Locales</div>
<svg class="i" style="left:435.10px;top:1076.75px;width:15.40px;height:14.50px;color:#697a8d;stroke-width:2.133" viewBox="1.733 2.333 20.533 19.333"><path d="M12 3.4 L21.2 7.8 V16.2 L12 20.6 L2.8 16.2 V7.8 Z"/><path d="M2.8 7.8 L12 12.2 L21.2 7.8 M12 12.2 V20.6"/><path d="M7.4 5.6 L16.6 10 V13.2"/></svg>
<div class="t" style="left:457.3px;top:1076.30px;font-size:15px;color:#697a8d;letter-spacing:0.3px;-webkit-text-stroke:0.2px #697a8d;">Productos</div>
<svg class="i" style="left:568.95px;top:1077.15px;width:13.70px;height:13.70px;color:#697a8d;stroke-width:2.221" viewBox="2.489 2.489 19.021 19.021"><rect x="3.6" y="3.6" width="6.4" height="6.4" rx="1"/><rect x="14" y="3.6" width="6.4" height="6.4" rx="1"/><rect x="3.6" y="14" width="6.4" height="6.4" rx="1"/><circle cx="17.2" cy="17.2" r="3.2"/></svg>
<div class="t" style="left:590px;top:1076.30px;font-size:15px;color:#697a8d;letter-spacing:0.3px;-webkit-text-stroke:0.2px #697a8d;">Categorías</div>
<div class="t" style="left:354px;top:1139.14px;font-size:12px;color:#566a7f;letter-spacing:1px;">#</div>
<div class="t" style="left:578.8px;top:1139.14px;font-size:12px;color:#566a7f;letter-spacing:1px;">LOCAL</div>
<div class="t" style="left:1296.8px;top:1139.14px;font-size:12px;color:#566a7f;letter-spacing:1px;">VENTAS</div>
<div class="t" style="left:1916.8px;top:1139.14px;font-size:12px;color:#566a7f;letter-spacing:1px;">PORCENTAJE</div>
<div class="a" style="left:334px;top:1162px;width:2137px;height:1px;background:#d9dee3;border-radius:0px;"></div>
<div class="t" style="left:354px;top:1181.46px;font-size:16px;color:#697a8d;-webkit-text-stroke:0.2px #697a8d;">1</div>
<div class="a" style="left:578px;top:1173px;width:32px;height:32px;border-radius:50%;background:#dedede"></div>
<div class="t" style="left:394px;width:400px;text-align:center;top:1183.34px;font-size:12px;color:#333;">DE</div>
<div class="t" style="left:618.6px;top:1181.46px;font-size:16px;color:#697a8d;letter-spacing:0.4px;-webkit-text-stroke:0.2px #697a8d;">devv</div>
<div class="t" style="left:1296.8px;top:1181.46px;font-size:16px;color:#697a8d;letter-spacing:0.7px;-webkit-text-stroke:0.2px #697a8d;">$776.398,60</div>
<div class="t" style="right:95px;top:1181.46px;font-size:16px;color:#a1acb8;-webkit-text-stroke:0.2px #a1acb8;">100.00%</div>
<div class="a" style="left:1216px;top:0px;width:0px;height:0px;background:#fff;border-radius:0px;"></div>
<div class="t" style="left:354px;top:1234.46px;font-size:16px;color:#697a8d;-webkit-text-stroke:0.2px #697a8d;">2</div>
<div class="a" style="left:578px;top:1226px;width:32px;height:32px;border-radius:50%;background:#dedede"></div>
<div class="t" style="left:394px;width:400px;text-align:center;top:1236.34px;font-size:12px;color:#333;">EM</div>
<div class="t" style="left:618.6px;top:1234.46px;font-size:16px;color:#697a8d;letter-spacing:0.4px;-webkit-text-stroke:0.2px #697a8d;">Empresa 2</div>
<div class="t" style="left:1296.8px;top:1234.46px;font-size:16px;color:#697a8d;letter-spacing:0.7px;-webkit-text-stroke:0.2px #697a8d;">$0,00</div>
<div class="t" style="right:95px;top:1234.46px;font-size:16px;color:#a1acb8;-webkit-text-stroke:0.2px #a1acb8;">0.00%</div>
<div class="a" style="left:1269px;top:0px;width:0px;height:0px;background:#fff;border-radius:0px;"></div>
<div class="a" style="left:334px;top:1215px;width:2137px;height:1px;background:#d9dee3;border-radius:0px;"></div>
<div class="a" style="left:334px;top:1268px;width:2137px;height:1px;background:#d9dee3;border-radius:0px;"></div>
<div class="a" style="left:1917px;top:1185px;width:454px;height:8px;background:#333;border-radius:4px;box-shadow:0 2px 4px rgba(0,0,0,.18);"></div>
<div class="a" style="left:1917px;top:1238px;width:471px;height:8px;background:#eceef1;border-radius:4px;"></div>
</div>
</body></html>
